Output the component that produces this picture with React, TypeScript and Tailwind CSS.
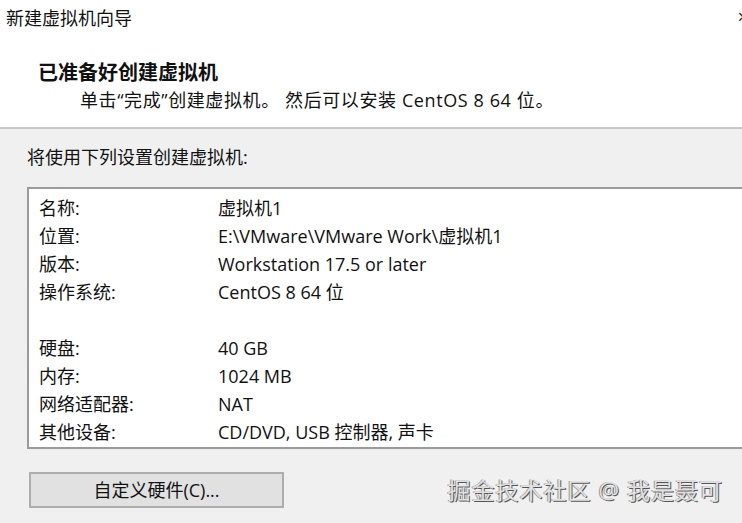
import React from "react";

const rows: [string, string][] = [
  ["名称:", "虚拟机1"],
  ["位置:", "E:\\VMware\\VMware Work\\虚拟机1"],
  ["版本:", "Workstation 17.5 or later"],
  ["操作系统:", "CentOS 8 64 位"],
  ["", ""],
  ["硬盘:", "40 GB"],
  ["内存:", "1024 MB"],
  ["网络适配器:", "NAT"],
  ["其他设备:", "CD/DVD, USB 控制器, 声卡"],
];

const font = { fontFamily: '"Open Sans", "Noto Sans CJK SC", sans-serif' };

export default function App() {
  return (
    <div className="w-[742px] h-[523px] overflow-hidden bg-[#f0f0f0] text-[#111]" style={font}>
      {/* header */}
      <div className="relative h-[129px] bg-white border-b-2 border-[#c8c8c8]">
        <div className="pl-[6px] pt-[6px] text-[18px] leading-[24px]">新建虚拟机向导</div>
        <div className="absolute right-[-7px] top-[2px] text-[20px] text-[#333]">×</div>
        <div className="pl-[38px] pt-[30px] text-[20px] leading-[26px] font-bold">已准备好创建虚拟机</div>
        <div className="pl-[80px] pt-[1px] text-[18px] leading-[26px] tracking-[0.6px]">
          单击“完成”创建虚拟机。 然后可以安装 CentOS 8 64 位。
        </div>
      </div>

      {/* body */}
      <div className="pl-[27px] pt-[16px]">
        <div className="text-[18px] leading-[24px]">将使用下列设置创建虚拟机:</div>
        <div className="mt-[18px] h-[262px] bg-white border-2 border-r-0 border-[#9a9a9a] pl-[10px] pt-[5px]">
          {rows.map(([k, v], i) => (
            <div key={i} className="flex h-[28px] items-center text-[18px]">
              <div className="w-[179px]">{k}</div>
              <div>{v}</div>
            </div>
          ))}
        </div>
        <div className="flex items-center mt-[23px]">
          <button className="ml-[2px] w-[255px] h-[36px] bg-[#e1e1e1] border-2 border-[#adadad] text-[18px]">
            自定义硬件(C)...
          </button>
          <div
            className="ml-auto mr-[19px] text-[23px] text-[#e2e2e2] tracking-[1px]"
            style={{ textShadow: "1px 1px 0 #555, -1px 0 0 #999" }}
          >
            掘金技术社区 @ 我是聂可
          </div>
        </div>
      </div>
    </div>
  );
}
